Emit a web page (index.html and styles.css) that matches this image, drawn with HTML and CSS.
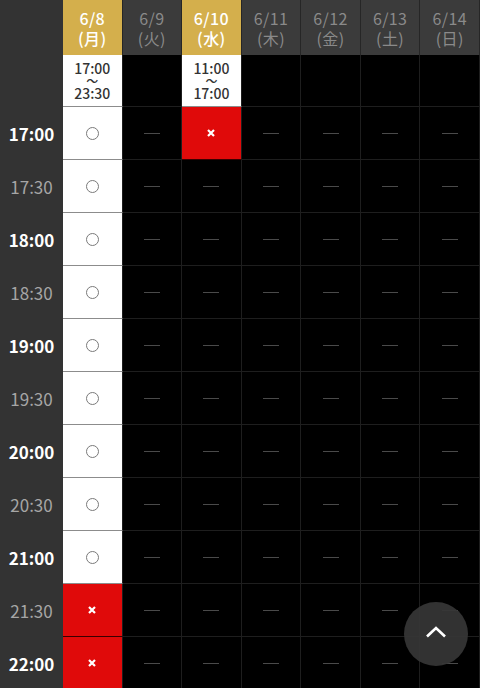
FILE: index.html
```html
<!DOCTYPE html>
<html lang="ja">
<head>
    <meta charset="UTF-8">
    <meta name="viewport" content="width=device-width, initial-scale=1.0">
    <title>予約カレンダー</title>
    <link rel="stylesheet" href="styles.css">
</head>
<body>
    <div class="schedule">
        <!-- 日付 -->
        <div class="corner"></div>
        <div class="day day--open">6/8<br>(月)</div>
        <div class="day">6/9<br>(火)</div>
        <div class="day day--open">6/10<br>(水)</div>
        <div class="day">6/11<br>(木)</div>
        <div class="day">6/12<br>(金)</div>
        <div class="day">6/13<br>(土)</div>
        <div class="day">6/14<br>(日)</div>

        <!-- 営業時間 -->
        <div class="hours hours--open"><p>17:00<br><span class="tilde">〜</span><br>23:30</p></div>
        <div class="hours"></div>
        <div class="hours hours--open"><p>11:00<br><span class="tilde">〜</span><br>17:00</p></div>
        <div class="hours"></div>
        <div class="hours"></div>
        <div class="hours"></div>
        <div class="hours"></div>

        <div class="time time--hour">17:00</div>
        <div class="slot slot--ok"><span class="mark-ok"></span></div>
        <div class="slot"><span class="mark-none"></span></div>
        <div class="slot slot--ng"><svg class="mark-ng" viewBox="0 0 8 8"><path d="M1 1L7 7M7 1L1 7"/></svg></div>
        <div class="slot"><span class="mark-none"></span></div>
        <div class="slot"><span class="mark-none"></span></div>
        <div class="slot"><span class="mark-none"></span></div>
        <div class="slot"><span class="mark-none"></span></div>

        <div class="time">17:30</div>
        <div class="slot slot--ok"><span class="mark-ok"></span></div>
        <div class="slot"><span class="mark-none"></span></div>
        <div class="slot"><span class="mark-none"></span></div>
        <div class="slot"><span class="mark-none"></span></div>
        <div class="slot"><span class="mark-none"></span></div>
        <div class="slot"><span class="mark-none"></span></div>
        <div class="slot"><span class="mark-none"></span></div>

        <div class="time time--hour">18:00</div>
        <div class="slot slot--ok"><span class="mark-ok"></span></div>
        <div class="slot"><span class="mark-none"></span></div>
        <div class="slot"><span class="mark-none"></span></div>
        <div class="slot"><span class="mark-none"></span></div>
        <div class="slot"><span class="mark-none"></span></div>
        <div class="slot"><span class="mark-none"></span></div>
        <div class="slot"><span class="mark-none"></span></div>

        <div class="time">18:30</div>
        <div class="slot slot--ok"><span class="mark-ok"></span></div>
        <div class="slot"><span class="mark-none"></span></div>
        <div class="slot"><span class="mark-none"></span></div>
        <div class="slot"><span class="mark-none"></span></div>
        <div class="slot"><span class="mark-none"></span></div>
        <div class="slot"><span class="mark-none"></span></div>
        <div class="slot"><span class="mark-none"></span></div>

        <div class="time time--hour">19:00</div>
        <div class="slot slot--ok"><span class="mark-ok"></span></div>
        <div class="slot"><span class="mark-none"></span></div>
        <div class="slot"><span class="mark-none"></span></div>
        <div class="slot"><span class="mark-none"></span></div>
        <div class="slot"><span class="mark-none"></span></div>
        <div class="slot"><span class="mark-none"></span></div>
        <div class="slot"><span class="mark-none"></span></div>

        <div class="time">19:30</div>
        <div class="slot slot--ok"><span class="mark-ok"></span></div>
        <div class="slot"><span class="mark-none"></span></div>
        <div class="slot"><span class="mark-none"></span></div>
        <div class="slot"><span class="mark-none"></span></div>
        <div class="slot"><span class="mark-none"></span></div>
        <div class="slot"><span class="mark-none"></span></div>
        <div class="slot"><span class="mark-none"></span></div>

        <div class="time time--hour">20:00</div>
        <div class="slot slot--ok"><span class="mark-ok"></span></div>
        <div class="slot"><span class="mark-none"></span></div>
        <div class="slot"><span class="mark-none"></span></div>
        <div class="slot"><span class="mark-none"></span></div>
        <div class="slot"><span class="mark-none"></span></div>
        <div class="slot"><span class="mark-none"></span></div>
        <div class="slot"><span class="mark-none"></span></div>

        <div class="time">20:30</div>
        <div class="slot slot--ok"><span class="mark-ok"></span></div>
        <div class="slot"><span class="mark-none"></span></div>
        <div class="slot"><span class="mark-none"></span></div>
        <div class="slot"><span class="mark-none"></span></div>
        <div class="slot"><span class="mark-none"></span></div>
        <div class="slot"><span class="mark-none"></span></div>
        <div class="slot"><span class="mark-none"></span></div>

        <div class="time time--hour">21:00</div>
        <div class="slot slot--ok"><span class="mark-ok"></span></div>
        <div class="slot"><span class="mark-none"></span></div>
        <div class="slot"><span class="mark-none"></span></div>
        <div class="slot"><span class="mark-none"></span></div>
        <div class="slot"><span class="mark-none"></span></div>
        <div class="slot"><span class="mark-none"></span></div>
        <div class="slot"><span class="mark-none"></span></div>

        <div class="time">21:30</div>
        <div class="slot slot--ng"><svg class="mark-ng" viewBox="0 0 8 8"><path d="M1 1L7 7M7 1L1 7"/></svg></div>
        <div class="slot"><span class="mark-none"></span></div>
        <div class="slot"><span class="mark-none"></span></div>
        <div class="slot"><span class="mark-none"></span></div>
        <div class="slot"><span class="mark-none"></span></div>
        <div class="slot"><span class="mark-none"></span></div>
        <div class="slot"><span class="mark-none"></span></div>

        <div class="time time--hour">22:00</div>
        <div class="slot slot--ng"><svg class="mark-ng" viewBox="0 0 8 8"><path d="M1 1L7 7M7 1L1 7"/></svg></div>
        <div class="slot"><span class="mark-none"></span></div>
        <div class="slot"><span class="mark-none"></span></div>
        <div class="slot"><span class="mark-none"></span></div>
        <div class="slot"><span class="mark-none"></span></div>
        <div class="slot"><span class="mark-none"></span></div>
        <div class="slot"><span class="mark-none"></span></div>
    </div>

    <a class="page-top" href="#">
        <svg viewBox="0 0 22 12"><path d="M2 10.5L11 2L20 10.5"/></svg>
    </a>
</body>
</html>
```
FILE: styles.css
```css
body {
    margin: 0;
    padding: 0;
    background-color: #000;
    font-family: "Noto Sans CJK JP", "Noto Sans", sans-serif;
}
.schedule {
    display: grid;
    grid-template-columns: 63px repeat(7, minmax(0, 1fr));
    grid-template-rows: 55px 52px;
    grid-auto-rows: 53px;
}
.corner {
    grid-row: span 2;
    background-color: #333;
}
.day {
    display: flex;
    align-items: center;
    justify-content: center;
    text-align: center;
    background-color: #3b3b3b;
    border-right: 1px solid #262626;
    color: #8a8a8a;
    font-size: 16px;
    line-height: 20px;
    letter-spacing: 0.4px;
}
.day--open {
    background-color: #d4af4c;
    color: #fff;
    font-weight: 500;
}
.hours {
    display: flex;
    align-items: center;
    justify-content: center;
    text-align: center;
    background-color: #000;
    border-right: 1px solid #1e1e1e;
    border-bottom: 1px solid #1e1e1e;
    color: #333;
    font-size: 14px;
    line-height: 12px;
    font-weight: 500;
}
.hours p {
    margin: 0;
}
.hours--open {
    background-color: #fff;
    border-bottom-color: #8c8c8c;
}
.tilde {
    font-size: 12px;
}
.time {
    display: flex;
    align-items: center;
    justify-content: center;
    background-color: #333;
    color: #a6a6a6;
    font-size: 17px;
}
.time--hour {
    color: #fff;
    font-weight: bold;
}
.slot {
    display: flex;
    align-items: center;
    justify-content: center;
    background-color: #000;
    border-right: 1px solid #1e1e1e;
    border-bottom: 1px solid #1e1e1e;
}
.slot--ok {
    background-color: #fff;
    border-bottom-color: #8c8c8c;
}
.slot--ng {
    background-color: #e00a0a;
    border-bottom-color: #3a0000;
}
.mark-ok {
    width: 11px;
    height: 11px;
    border: 1.5px solid #7a7a7a;
    border-radius: 50%;
}
.mark-ng {
    width: 8px;
    height: 8px;
    fill: none;
    stroke: #fff;
    stroke-width: 2.2;
}
.mark-none {
    width: 16px;
    height: 1px;
    background-color: #4a4a4a;
}
.page-top {
    position: fixed;
    right: 12px;
    bottom: 22px;
    width: 64px;
    height: 64px;
    border-radius: 50%;
    background-color: rgba(54, 54, 54, 0.93);
    display: flex;
    align-items: center;
    justify-content: center;
}
.page-top svg {
    width: 22px;
    height: 12px;
    margin-top: -4px;
    fill: none;
    stroke: #fff;
    stroke-width: 2.6;
}
```
